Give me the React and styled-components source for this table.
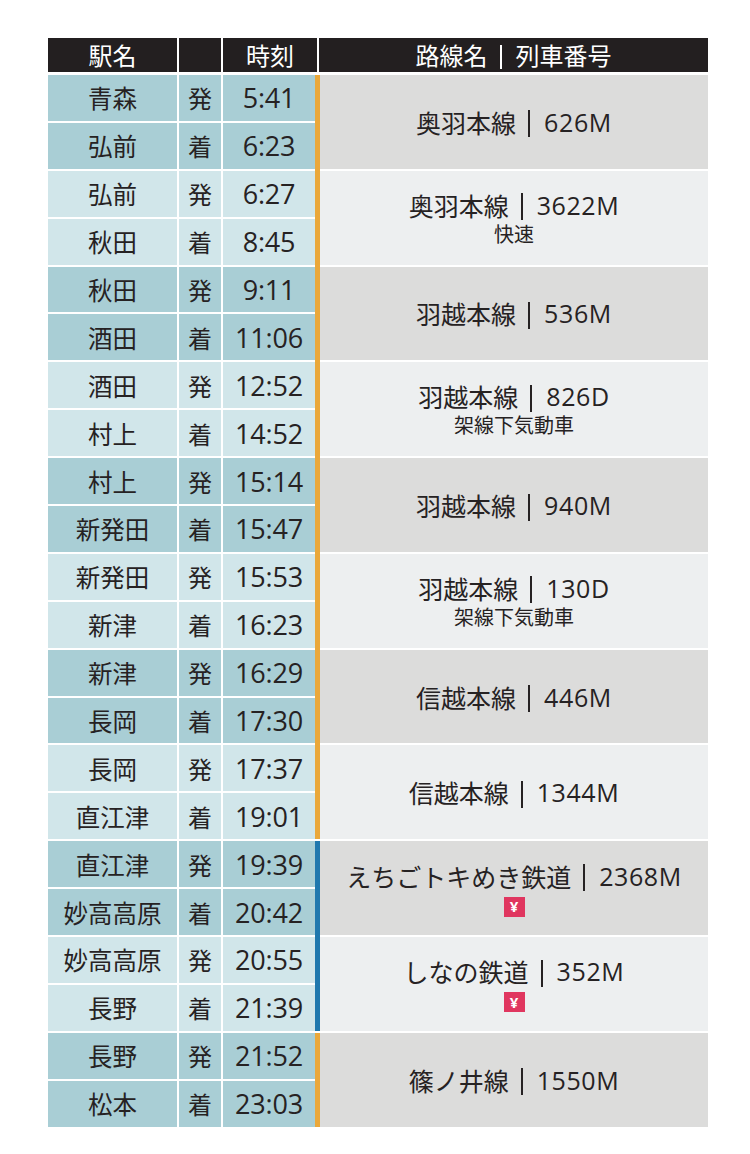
import React from "react";
import styled, { createGlobalStyle } from "styled-components";

const GlobalStyle = createGlobalStyle`
  html, body {
    margin: 0;
    padding: 0;
    background: #ffffff;
  }
  body {
    font-family: "Noto Sans CJK JP", "Noto Sans", sans-serif;
    font-weight: 400;
    color: #262223;
  }
`;

const ROW_H = 45.9;

const Page = styled.div`
  width: 750px;
  min-height: 1154px;
  padding: 38px 42px 0 48px;
  box-sizing: border-box;
`;

const Table = styled.div`
  width: 660px;
  display: flex;
  flex-direction: column;
  gap: 3px;
`;

const HeaderRow = styled.div`
  display: grid;
  grid-template-columns: 129px 42px 94px 1fr;
  column-gap: 2px;
  height: 34px;
`;

const HeaderCell = styled.div`
  background: #231f20;
  color: #ffffff;
  font-size: 24px;
  line-height: 34px;
  display: flex;
  align-items: center;
  justify-content: center;
  white-space: nowrap;
`;

const Bar = styled.span`
  display: inline-block;
  width: 2px;
  height: ${(p) => p.$h || 27}px;
  margin: 0 14px 0 12px;
  background: ${(p) => p.$color || "#262223"};
  transform: translateY(2px);
`;

const Body = styled.div`
  display: flex;
  flex-direction: column;
  gap: 2px;
`;

const Segment = styled.div`
  display: flex;
`;

const Stops = styled.div`
  display: grid;
  grid-template-columns: 129px 42px 92px;
  grid-auto-rows: ${ROW_H}px;
  gap: 2px;
`;

const Cell = styled.div`
  background: ${(p) => (p.$dark ? "#a9ced5" : "#d1e6ea")};
  display: flex;
  align-items: center;
  justify-content: center;
  white-space: nowrap;
`;

const Station = styled(Cell)`
  font-size: 24.5px;
`;

const Kind = styled(Cell)`
  font-size: 24px;
`;

const Time = styled(Cell)`
  font-family: "Open Sans", "Noto Sans", sans-serif;
  font-size: 27px;
  letter-spacing: -0.2px;
`;

const Accent = styled.div`
  width: 5px;
  background: ${(p) => p.$color};
  box-shadow: ${(p) => (p.$last ? "none" : `0 2px 0 ${p.$color}`)};
`;

const Route = styled.div`
  flex: 1;
  background: ${(p) => (p.$dark ? "#dcdcdb" : "#edeff0")};
  display: flex;
  flex-direction: column;
  align-items: center;
  justify-content: center;
`;

const RouteName = styled.div`
  display: flex;
  align-items: center;
  font-size: 25px;
  line-height: 32px;
  white-space: nowrap;
`;

const TrainNo = styled.span`
  font-family: "Open Sans", "Noto Sans", sans-serif;
  font-size: 25px;
  letter-spacing: 0.6px;
`;

const RouteNote = styled.div`
  font-size: 20px;
  line-height: 26px;
`;

const Yen = styled.span`
  display: inline-flex;
  align-items: center;
  justify-content: center;
  width: 21px;
  height: 20px;
  margin-top: 5px;
  background: #e0365f;
  color: #ffffff;
  font-family: "Noto Sans", sans-serif;
  font-size: 15px;
  font-weight: 700;
  line-height: 1;
`;

const ORANGE = "#eaa83a";
const BLUE = "#1f78ae";

const segments = [
  { from: ["青森", "5:41"], to: ["弘前", "6:23"], line: "奥羽本線", no: "626M" },
  { from: ["弘前", "6:27"], to: ["秋田", "8:45"], line: "奥羽本線", no: "3622M", note: "快速" },
  { from: ["秋田", "9:11"], to: ["酒田", "11:06"], line: "羽越本線", no: "536M" },
  { from: ["酒田", "12:52"], to: ["村上", "14:52"], line: "羽越本線", no: "826D", note: "架線下気動車" },
  { from: ["村上", "15:14"], to: ["新発田", "15:47"], line: "羽越本線", no: "940M" },
  { from: ["新発田", "15:53"], to: ["新津", "16:23"], line: "羽越本線", no: "130D", note: "架線下気動車" },
  { from: ["新津", "16:29"], to: ["長岡", "17:30"], line: "信越本線", no: "446M" },
  { from: ["長岡", "17:37"], to: ["直江津", "19:01"], line: "信越本線", no: "1344M" },
  { from: ["直江津", "19:39"], to: ["妙高高原", "20:42"], line: "えちごトキめき鉄道", no: "2368M", yen: true, accent: BLUE },
  { from: ["妙高高原", "20:55"], to: ["長野", "21:39"], line: "しなの鉄道", no: "352M", yen: true, accent: BLUE },
  { from: ["長野", "21:52"], to: ["松本", "23:03"], line: "篠ノ井線", no: "1550M" },
];

const App = () => (
  <>
    <GlobalStyle />
    <Page>
      <Table>
        <HeaderRow>
          <HeaderCell>駅名</HeaderCell>
          <HeaderCell />
          <HeaderCell>時刻</HeaderCell>
          <HeaderCell>
            路線名
            <Bar $color="#ffffff" $h={24} />
            列車番号
          </HeaderCell>
        </HeaderRow>
        <Body>
          {segments.map((s, i) => {
            const dark = i % 2 === 0;
            const next = segments[i + 1];
            const color = s.accent || ORANGE;
            const nextColor = next ? next.accent || ORANGE : null;
            return (
              <Segment key={i}>
                <Stops>
                  <Station $dark={dark}>{s.from[0]}</Station>
                  <Kind $dark={dark}>発</Kind>
                  <Time $dark={dark}>{s.from[1]}</Time>
                  <Station $dark={dark}>{s.to[0]}</Station>
                  <Kind $dark={dark}>着</Kind>
                  <Time $dark={dark}>{s.to[1]}</Time>
                </Stops>
                <Accent $color={color} $last={!next || nextColor !== color} />
                <Route $dark={dark}>
                  <RouteName>
                    {s.line}
                    <Bar />
                    <TrainNo>{s.no}</TrainNo>
                  </RouteName>
                  {s.note && <RouteNote>{s.note}</RouteNote>}
                  {s.yen && <Yen>¥</Yen>}
                </Route>
              </Segment>
            );
          })}
        </Body>
      </Table>
    </Page>
  </>
);

export default App;
